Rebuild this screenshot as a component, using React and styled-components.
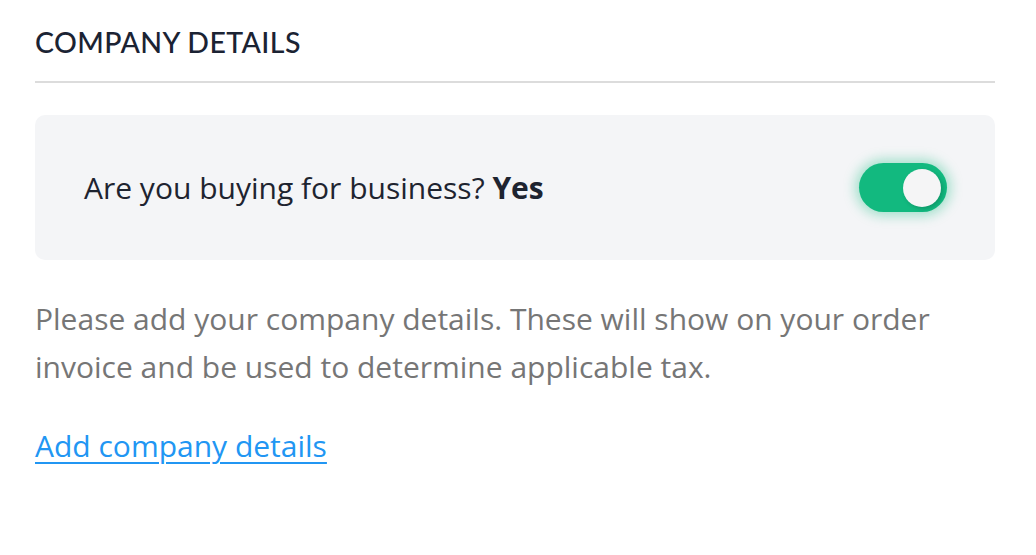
import styled, { createGlobalStyle } from 'styled-components'

const Global = createGlobalStyle`
    body {
        margin: 0;
        background: #fff;
        font-family: "Open Sans", "Noto Sans", sans-serif;
    }
`

const Section = styled.section`
    box-sizing: border-box;
    width: 1036px;
    padding: 24px 41px 0 35px;
`

const Title = styled.h2`
    margin: 0;
    padding: 0 0 21px;
    font-family: "Lato", "Inter", sans-serif;
    font-size: 28.5px;
    line-height: 36px;
    font-weight: 500;
    letter-spacing: 0.4px;
    color: #1b2333;
    border-bottom: 2px solid #dcdcdc;
`

const Card = styled.div`
    display: flex;
    justify-content: space-between;
    align-items: center;
    box-sizing: border-box;
    height: 145px;
    margin-top: 32px;
    padding: 0 48px 0 49px;
    background: #f4f5f7;
    border-radius: 10px;
`

const Question = styled.p`
    margin: 0;
    font-size: 30px;
    color: #1e2430;
    b {
        font-weight: 700;
    }
`

const Toggle = styled.button`
    position: relative;
    width: 88px;
    height: 49px;
    padding: 0;
    border: none;
    border-radius: 25px;
    background: ${p => (p.$on ? '#12b97f' : '#c7ccd4')};
    box-shadow: ${p => (p.$on ? '0 0 12px 4px rgba(18, 185, 127, 0.35)' : 'none')};
    cursor: pointer;
    .knob {
        position: absolute;
        top: 6px;
        left: ${p => (p.$on ? '44px' : '6px')};
        width: 38px;
        height: 38px;
        border-radius: 50%;
        background: #f5f5f6;
        box-shadow: 2px 2px 4px rgba(0, 0, 0, 0.18);
    }
`

const Note = styled.p`
    max-width: 930px;
    margin: 35px 0 0;
    font-size: 30px;
    line-height: 48px;
    color: #767676;
`

const AddLink = styled.a`
    display: inline-block;
    margin-top: 34px;
    font-size: 30px;
    color: #2196f3;
    text-decoration: underline;
    text-decoration-thickness: 2px;
    text-underline-offset: 5px;
`

const App = function App() {
    return <>
        <Global />
        <Section>
            <Title>COMPANY DETAILS</Title>
            <Card>
                <Question>Are you buying for business? <b>Yes</b></Question>
                <Toggle $on aria-label="Buying for business">
                    <span className="knob" />
                </Toggle>
            </Card>
            <Note>
                Please add your company details. These will show on your order
                invoice and be used to determine applicable tax.
            </Note>
            <AddLink href="#">Add company details</AddLink>
        </Section>
    </>
}
export default App
